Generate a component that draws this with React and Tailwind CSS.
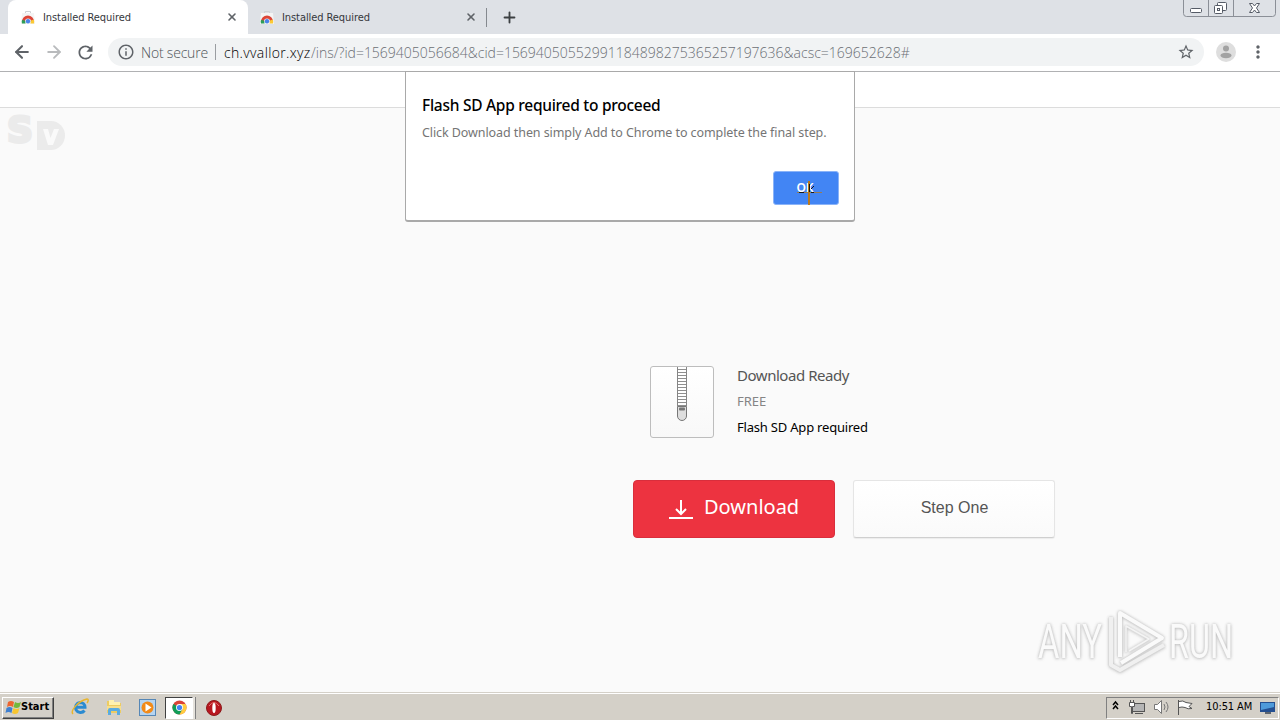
import { ArrowLeft, ArrowRight, Plus, X } from "lucide-react";
import { MdInfoOutline, MdMoreVert, MdRefresh, MdStarBorder } from "react-icons/md";

const StoreIcon = () => (
  <svg className="h-4 w-4 shrink-0" viewBox="0 0 16 16">
    <path d="M5.500 4V2.500h5V4" fill="none" stroke="#cfd1d4" />
    <path d="M2 4h12l1 11H1z" fill="#f4f4f4" />
    <path d="M2 12.500a6 6 0 0112 0h-3a3 3 0 00-6 0z" fill="#dc4437" />
    <path d="M2 11a6 6 0 000 3.500h3.500L5 11.500z" fill="#2e9e57" />
    <path d="M13.700 10.500a6 6 0 01.3 4h-3.500L11 11.500z" fill="#fbc934" />
    <circle cx="8" cy="12.300" r="2.200" fill="#4a83ea" />
  </svg>
);

const Tab = ({ active }) => (
  <div
    className={
      active
        ? "flex h-[34px] w-[240px] items-center rounded-t-lg bg-white pl-3 pr-2.5"
        : "flex h-[34px] w-[239px] items-center pl-[11px] pr-2.5"
    }
  >
    <StoreIcon />
    <span className="ml-[7px] flex-1 whitespace-nowrap font-['DejaVu_Sans_Condensed','DejaVu_Sans',sans-serif] text-[11px] leading-none tracking-[-0.08px] text-[#35373b] [font-stretch:condensed]">
      Installed Required
    </span>
    <X size={12} strokeWidth={3.200} color="#5f6368" />
  </div>
);

const WindowButtons = () => (
  <svg className="ml-auto mr-[3px] h-[17px] w-[94px] self-start" viewBox="0 0 94 17" fill="none">
    <path d="M.5 0v13.500a3 3 0 003 3h86a3 3 0 003-3V0M25.500 0v16M50.500 0v16" stroke="#8b8f97" />
    <rect x="7.500" y="8.500" width="11" height="4" rx="1" fill="#fff" stroke="#555b66" />
    <rect x="34.500" y="2.500" width="9" height="8" rx="1" fill="#fff" stroke="#555b66" />
    <rect x="31.500" y="5.500" width="8" height="8" rx="1" fill="#fff" stroke="#555b66" />
    <rect x="34.500" y="8.500" width="2" height="2" stroke="#555b66" />
    <path d="M66.500 3.500h3l2 2.500 2-2.500h3L73.500 8l3 4.500h-3l-2-2.500-2 2.500h-3l3-4.500z" fill="#fff" stroke="#555b66" />
  </svg>
);

const TabStrip = () => (
  <div className="flex h-[34px] items-center bg-[#dee1e6] pl-2">
    <Tab active />
    <Tab />
    <div className="-ml-px h-[19px] w-px bg-[#85898f]" />
    <Plus className="ml-3.5" size={17} strokeWidth={2.600} color="#3c4043" />
    <WindowButtons />
  </div>
);

const Toolbar = () => (
  <div className="flex h-[38px] items-center border-b border-[#b0b1b3] bg-white pb-px pl-3">
    <ArrowLeft size={20} strokeWidth={2.500} color="#5f6368" />
    <ArrowRight className="ml-3" size={20} strokeWidth={2.200} color="#b9bbbd" />
    <MdRefresh className="ml-[11px]" size={21} color="#5f6368" />
    <div className="ml-3 flex h-7 w-[1096px] items-center rounded-full bg-[#f1f3f4] pl-[9px] pr-[9px] font-['Open_Sans','Noto_Sans',sans-serif] text-[14px] font-light">
      <MdInfoOutline size={18} color="#5f6368" />
      <span className="ml-1.5 w-[67px] whitespace-nowrap tracking-[-0.2px] text-[#4f5358]">Not secure</span>
      <div className="ml-[7px] h-4 w-px bg-[#9a9da1]" />
      <span className="ml-2 w-[87px] whitespace-nowrap tracking-[0.35px] text-[#000]">ch.vvallor.xyz</span>
      <span className="whitespace-nowrap text-[#6b6f74]">
        /ins/?id=1569405056684&amp;cid=15694050552991184898275365257197636&amp;acsc=169652628#
      </span>
      <MdStarBorder className="ml-auto" size={18} color="#5f6368" />
    </div>
    <svg className="ml-3 h-5 w-5" viewBox="0 0 20 20">
      <circle cx="10" cy="10" r="10" fill="#dedede" />
      <circle cx="10" cy="6.500" r="3" fill="#a2a2a2" />
      <ellipse cx="10" cy="13.500" rx="5.500" ry="2.700" fill="#a2a2a2" />
    </svg>
    <MdMoreVert className="ml-3" size={20} color="#5f6368" />
  </div>
);

const Alert = () => (
  <div className="absolute left-[405px] top-[-1px] h-[151px] w-[450px] rounded-b-[3px] border border-b-2 border-[#a9a9a9] bg-white px-4 pr-[15px] pt-[23px] font-['Noto_Sans',sans-serif]">
    <h1 className="whitespace-nowrap text-[15.500px] font-medium leading-5 tracking-[-0.27px] text-black">
      Flash SD App required to proceed
    </h1>
    <p className="mt-[9px] whitespace-nowrap text-[12.500px] leading-[18px] tracking-[-0.08px] text-[#757575]">
      Click Download then simply Add to Chrome to complete the final step.
    </p>
    <button className="relative ml-auto mt-[29px] flex h-[34px] w-[66px] items-center justify-center rounded-[3px] border border-[#8ab3f8] bg-[#4285f4] pr-0.5 text-[12px] font-semibold leading-none text-white">
      OK
      <svg className="absolute left-[23px] top-[9px] h-[24px] w-[26px]" viewBox="0 0 26 24">
        <path d="M0 11.500h25" stroke="#957b58" />
        <path d="M12 0v24" stroke="#b9791e" strokeWidth="2" />
        <path d="M12.500 3v8M2 11.500h5M14 11.500h3M14 8l3-3" stroke="#161616" />
      </svg>
    </button>
  </div>
);

const SdLogo = () => (
  <div className="flex h-10 items-start pl-[7px] pt-1">
    <span className="h-10 w-[30px] font-['DejaVu_Sans',sans-serif] text-[36px] font-bold leading-[40px] text-[#ebebeb] [-webkit-text-stroke:3px_#ebebeb]">
      <span className="-mt-0.5 block">S</span>
    </span>
    <svg className="h-10 w-[30px]" viewBox="30 0 30 40">
      <path d="M30 9h14a14 14.500 0 010 29H30z" fill="#ebebeb" />
      <path d="M36 17h5l2.500 9 3.500-9h5l-6 16h-5z" fill="#fafafa" />
    </svg>
  </div>
);

const zipTeeth = [3, 6, 9, 12, 15, 18, 21, 24, 27, 30, 33, 36, 39];

const ZipIcon = () => (
  <div className="flex h-[72px] w-16 rounded-[3px] border border-[#bdbdbd] bg-linear-to-b from-white to-[#f8f8f8] pl-[26px]">
    <svg className="h-[55px] w-[11px]" viewBox="0 0 11 55" fill="none">
      <path d="M.5 0v39h9V0" fill="#fff" stroke="#858585" />
      {zipTeeth.map((y) => (
        <path key={y} d={`M1 ${y - 0.5}h8`} stroke="#8f8f8f" />
      ))}
      <path d="M.5 39.500h9V49a4.500 4.500 0 01-9 0z" fill="#dedede" stroke="#777" />
      <rect x="2" y="40.500" width="6" height="3" rx="1" fill="#777" />
    </svg>
  </div>
);

const DownloadCard = () => (
  <div className="ml-[633px] mt-[218px] w-[422px]">
    <div className="flex pl-[17px] font-['Noto_Sans',sans-serif]">
      <ZipIcon />
      <div className="-mt-px ml-[23px] whitespace-nowrap">
        <h2 className="text-[15px] leading-5 tracking-[-0.46px] text-[#555]">Download Ready</h2>
        <p className="mt-[7px] text-[13px] leading-[18px] text-[#858585]">FREE</p>
        <p className="mt-[7px] text-[13px] leading-5 tracking-[-0.2px] text-black">Flash SD App required</p>
      </div>
    </div>
    <div className="mt-[42px] flex gap-[18px]">
      <button className="flex h-[58px] w-[202px] items-center rounded-[4px] border border-[#d92e3c] bg-[#ed3340] pb-1 pl-[35px] text-white">
        <svg className="mt-1 h-[22px] w-6" viewBox="0 0 24 22" fill="none" stroke="currentColor" strokeWidth="2">
          <path d="M12 2v14M7 11l5 5 5-5M0 20h24" />
        </svg>
        <span className="ml-[11px] whitespace-nowrap font-['Noto_Sans',sans-serif] text-[20px] leading-none">Download</span>
      </button>
      <button className="h-[58px] w-[202px] rounded-[3px] border border-[#e5e5e5] border-b-[#cfcfcf] bg-linear-to-b from-white to-[#fafafa] pb-0.5 pl-px font-['Liberation_Sans',sans-serif] text-[16px] text-[#555] shadow-[0_1px_1px_rgba(0,0,0,0.06)]">
        Step One
      </button>
    </div>
  </div>
);

const Watermark = () => (
  <div className="absolute left-[1038px] top-[536px] flex h-16 items-center font-['Roboto',sans-serif] [filter:drop-shadow(0_0_1.500px_#bbb)_drop-shadow(0_1px_1px_#ddd)]">
    <svg className="h-[68px] w-[200px] overflow-visible" viewBox="0 0 200 68">
      <g fill="#fafafa" fontSize="48">
        <text x="0" y="52" textLength="64" lengthAdjust="spacingAndGlyphs">ANY</text>
        <text x="131" y="52" textLength="64" lengthAdjust="spacingAndGlyphs">RUN</text>
      </g>
      <g fill="none" strokeWidth="4" strokeLinejoin="round">
        <path d="M73 11v48l9 5 44-25" stroke="#f0f0f0" />
        <path d="M82 51V7l42 25-41 25" stroke="#fafafa" />
        <path d="M88 46V20l23 13-20 12" stroke="#f4f4f4" strokeWidth="1.500" />
      </g>
    </svg>
  </div>
);

const WindowsFlag = () => (
  <svg className="h-4 w-4" viewBox="0 0 16 16">
    <path d="M3 2q3-2 6 0L8 7Q5 5 2 7z" fill="#ed6530" />
    <path d="M10 2q3 2 6 0l-1.500 5q-3 2-6 0z" fill="#73b83d" />
    <path d="M1.500 8q3-2 6 0l-1 5q-3-2-6 0z" fill="#3f80d1" />
    <path d="M8.500 8q3 2 6 0L13 13q-3 2-6 0z" fill="#f8c630" />
  </svg>
);

const ExplorerIcon = () => (
  <svg className="h-[18px] w-[18px]" viewBox="0 0 18 18" fill="none">
    <path d="M13.500 12.500A5 5 0 119 4.500c3 0 5 2 5 4.800H5" stroke="#2b8bd1" strokeWidth="3" />
    <path d="M2 16C-1 13 7 3 16 1c2 0 1 3 0 4" stroke="#e8b52d" strokeWidth="1.500" />
  </svg>
);

const FolderIcon = () => (
  <svg className="h-[18px] w-[18px]" viewBox="0 0 18 18">
    <path d="M2 3h6l1 2h7v10H2z" fill="#edcc62" />
    <path d="M4 2h5v2h6v3H4z" fill="#fff1af" />
    <path d="M2 8h14v4H2z" fill="#f8df8c" />
    <path d="M3 17v-5q0-2 2-2h8q2 0 2 2v5h-3v-4H6v4z" fill="#5aabe0" />
  </svg>
);

const PlayerIcon = () => (
  <svg className="h-[17px] w-[17px]" viewBox="0 0 17 17">
    <rect x=".5" y=".5" width="16" height="16" fill="#b5d4f1" stroke="#5687b6" />
    <circle cx="8.500" cy="8.500" r="6" fill="#f28a18" />
    <path d="M6.500 4.500v8l6-4z" fill="#fff" />
  </svg>
);

const ChromeIcon = () => (
  <svg className="h-[15px] w-[15px]" viewBox="0 0 16 16">
    <circle cx="8" cy="8" r="7.500" fill="#db4437" />
    <path d="M1.500 4.250A7.500 7.500 0 008 15.500l3.250-5.600L8 8z" fill="#109d58" />
    <path d="M14.500 4.250A7.500 7.500 0 018 15.500L11.250 9.900 8 4.250z" fill="#ffcd40" />
    <circle cx="8" cy="8" r="3.700" fill="#fff" />
    <circle cx="8" cy="8" r="2.800" fill="#4285f4" />
  </svg>
);

const OperaIcon = () => (
  <svg className="h-4 w-4" viewBox="0 0 16 16">
    <circle cx="8" cy="8" r="7.500" fill="#b81720" stroke="#8c1a1b" />
    <path d="M3 6q5-7 10 0" stroke="#e47673" fill="none" />
    <ellipse cx="8" cy="8" rx="1.700" ry="5" fill="#fff" />
  </svg>
);

const Tray = () => (
  <div className="ml-auto mr-px flex h-[22px] w-[173px] items-center border border-[#fff] border-l-[#808080] border-t-[#808080] pl-[5px]">
    <svg className="-mt-0.5 h-[18px] w-[84px]" viewBox="0 0 84 18" fill="none">
      <path d="M1 7l2.500-3L6 7M1 11l2.500-3L6 11" stroke="#000" strokeWidth="1.500" />
      <g stroke="#555">
        <rect x="20.500" y="5.500" width="12" height="8" fill="#b5b5b5" />
        <path d="M23 15.500h8" />
        <path d="M17.500 4.500h5v4h-2v7h-1v-7h-2zM18.500 2v2M21.500 2v2" fill="#fff" />
      </g>
      <g stroke="#777">
        <path d="M42.500 6.500h3l4-4v13l-4-4h-3z" fill="#fff" />
        <path d="M52 6q2 3 0 6M54 4q4 5 0 10" />
      </g>
      <path d="M66.500 2v15M67 3.500q4-1.500 7 1l6 1-3 3 3 2q-4 1-7-1-3-1-6 0" fill="#fff" stroke="#555" />
    </svg>
    <span className="ml-[10px] w-[47px] whitespace-nowrap font-['DejaVu_Sans_Condensed','DejaVu_Sans',sans-serif] text-[11px] tracking-[-0.1px] text-black [font-stretch:condensed]">
      10:51 AM
    </span>
    <svg className="ml-[7px] h-4 w-4" viewBox="0 0 16 16">
      <path d="M0 2h15v10H0z" fill="#244f91" />
      <path d="M1 3h13v4L1 10z" fill="#4e9ada" />
      <path d="M5 12h6v2H5z" fill="#5e6670" />
    </svg>
  </div>
);

const Taskbar = () => (
  <div className="flex h-7 items-center border-t border-[#d4d0c8] bg-[#d4d0c8] pl-0.5 pt-0.5 shadow-[inset_0_1px_0_#fff]">
    <div className="flex h-[22px] w-[52px] items-center border border-[#404040] border-l-white border-t-white pl-0.5 shadow-[inset_-1px_-1px_0_#808080]">
      <WindowsFlag />
      <span className="font-['DejaVu_Sans_Condensed','DejaVu_Sans',sans-serif] text-[11px] font-bold text-black [font-stretch:condensed]">
        Start
      </span>
    </div>
    <div className="ml-[17px] flex items-center gap-4 pb-px">
      <ExplorerIcon />
      <FolderIcon />
      <PlayerIcon />
    </div>
    <div className="ml-[9px] flex h-[22px] w-7 items-center justify-center border border-[#fff] border-l-[#404040] border-t-[#404040] bg-white pb-px">
      <ChromeIcon />
    </div>
    <div className="mr-2.5 h-[22px] w-[3px] border-r border-[#808080] bg-[#e5e2dc]" />
    <OperaIcon />
    <Tray />
  </div>
);

export default function App() {
  return (
    <div className="flex h-[720px] w-[1280px] flex-col overflow-hidden">
      <TabStrip />
      <Toolbar />
      <main className="relative flex-1 bg-[#fafafa]">
        <div className="h-9 border-b border-[#dcdcdc] bg-white" />
        <SdLogo />
        <DownloadCard />
        <Alert />
        <Watermark />
      </main>
      <Taskbar />
    </div>
  );
}
